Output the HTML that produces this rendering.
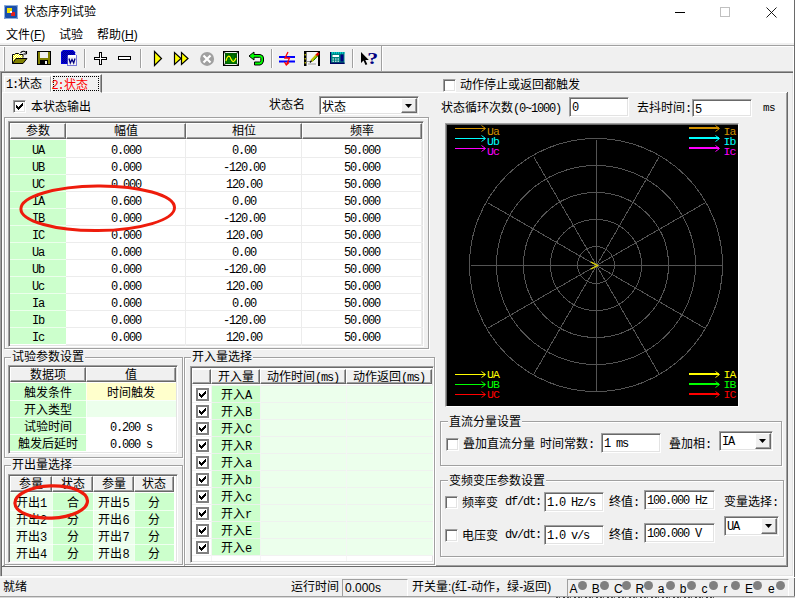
<!DOCTYPE html>
<html lang="zh-CN"><head><meta charset="utf-8"><title>状态序列试验</title>
<style>
html,body{margin:0;padding:0;}
body{width:795px;height:598px;overflow:hidden;background:#f0f0f0;position:relative;font-family:"Liberation Sans",sans-serif;font-size:12px;color:#000;}
div,span.a,svg{position:absolute;box-sizing:border-box;}
.t{white-space:nowrap;line-height:14px;font-size:12px;}
.m{white-space:nowrap;line-height:14px;font-size:12px;font-family:"Liberation Mono","Liberation Sans",monospace;letter-spacing:-1.2px;}
.mm{font-family:"Liberation Mono","Liberation Sans",monospace;letter-spacing:-1.2px;}
.etchw{border:1px solid #a0a0a0;box-shadow:1px 1px 0 #fff, inset 1px 1px 0 #fff;}
.sunk{border:1px solid;border-color:#a0a0a0 #fff #fff #a0a0a0;box-shadow:inset 1px 1px 0 #696969;background:#fff;}
.inp{border:1px solid;border-color:#a0a0a0 #fff #fff #a0a0a0;box-shadow:inset 1px 1px 0 #696969, inset -1px -1px 0 #e3e3e3;background:#fff;white-space:nowrap;overflow:hidden;font-size:12px;line-height:14px;padding:3px 0 0 2px;}
.hdr{background:#f0f0f0;border:1px solid;border-color:#fff #696969 #696969 #fff;box-shadow:inset -1px -1px 0 #a0a0a0;text-align:center;line-height:15px;font-size:12px;white-space:nowrap;overflow:hidden;}
.cell{white-space:nowrap;overflow:hidden;text-align:center;font-size:12px;line-height:20px;}
.cb{background:#fff;border:1px solid;border-color:#a0a0a0 #fff #fff #a0a0a0;box-shadow:inset 1px 1px 0 #696969, inset -1px -1px 0 #e3e3e3;}
.cb2{background:#fff;border:2px solid #808080;}
.cb2 svg{left:1px !important;top:1px !important;}
.gl{background:#f0f0f0;padding:0 1px;white-space:nowrap;line-height:14px;font-size:12px;}
.grid{background:#fff;border:1px solid;border-color:#a0a0a0 #fff #fff #a0a0a0;box-shadow:inset 1px 1px 0 #696969, inset -1px -1px 0 #e3e3e3;}
.btn{background:#f0f0f0;border:1px solid;border-color:#fff #696969 #696969 #fff;box-shadow:inset -1px -1px 0 #a0a0a0;}
</style></head><body>

<div style="left:0px;top:0px;width:795px;height:43px;background:#fff;"></div>
<svg style="left:4px;top:5px" width="14" height="14" viewBox="0 0 14 14"><rect x="0" y="0" width="14" height="14" rx="1.5" fill="#1b4fa8"/><rect x="0.5" y="0.5" width="13" height="13" rx="1.5" fill="none" stroke="#8fb0e0" stroke-width="1"/><rect x="3" y="3" width="5" height="5" fill="#f2e200"/><rect x="7" y="7" width="4" height="4" fill="#e02020"/><rect x="6" y="6" width="2" height="2" fill="#fff"/></svg>
<div class="t" style="left:24px;top:5px;">状态序列试验</div>
<svg style="left:669px;top:0" width="125" height="26" viewBox="0 0 125 26"><path d="M6 12.5h10" stroke="#000" stroke-width="1"/><rect x="51.5" y="7.5" width="9" height="9" fill="none" stroke="#c0c0c0" stroke-width="1"/><path d="M97.5 7.5l10 10M107.5 7.5l-10 10" stroke="#000" stroke-width="0.9"/></svg>
<div class="t" style="left:6px;top:28px;">文件(<u>F</u>)</div>
<div class="t" style="left:59px;top:28px;">试验</div>
<div class="t" style="left:97px;top:28px;">帮助(<u>H</u>)</div>
<div style="left:0px;top:45px;width:794px;height:1px;background:#a0a0a0;"></div>
<div style="left:0px;top:46px;width:794px;height:1px;background:#fff;"></div>
<div style="left:0px;top:71px;width:793px;height:1px;background:#a0a0a0;"></div>
<div style="left:0px;top:72px;width:793px;height:1px;background:#696969;"></div>
<div style="left:3px;top:47px;width:1px;height:24px;background:#fff;"></div>
<div style="left:4px;top:47px;width:1px;height:24px;background:#a0a0a0;"></div>
<div style="left:84px;top:49px;width:1px;height:19px;background:#a0a0a0;"></div>
<div style="left:85px;top:49px;width:1px;height:19px;background:#fff;"></div>
<div style="left:140px;top:49px;width:1px;height:19px;background:#a0a0a0;"></div>
<div style="left:141px;top:49px;width:1px;height:19px;background:#fff;"></div>
<div style="left:271px;top:49px;width:1px;height:19px;background:#a0a0a0;"></div>
<div style="left:272px;top:49px;width:1px;height:19px;background:#fff;"></div>
<div style="left:352px;top:49px;width:1px;height:19px;background:#a0a0a0;"></div>
<div style="left:353px;top:49px;width:1px;height:19px;background:#fff;"></div>
<div style="left:381px;top:46px;width:1px;height:25px;background:#a0a0a0;"></div>
<div style="left:382px;top:46px;width:1px;height:25px;background:#fff;"></div>
<!--TOOLBAR-->
<svg style="left:0;top:46px" width="400" height="25" viewBox="0 46 400 25">
<!-- open -->
<path d="M12.500 63.500v-9h2l1-1h3l1 1h3.500v3" fill="url(#dy)" stroke="#000"/><path d="M12.500 63.500l3.500-5h11l-4 5z" fill="#808000" stroke="#000"/><path d="M20.500 53c1.500-2.200 4-2.200 5.500-0.500m0.500 1.500v-3m0 3h-3" fill="none" stroke="#000" stroke-width="1.100"/>
<!-- save -->
<rect x="37.500" y="51.500" width="13" height="13" fill="#808000" stroke="#000"/><rect x="40" y="52" width="8" height="6" fill="#f0f0f0"/><rect x="40" y="60" width="8" height="4" fill="#000"/><rect x="45" y="61" width="2" height="3" fill="#f0f0f0"/>
<!-- word -->
<defs id="D"><pattern id="dz" width="2" height="2" patternUnits="userSpaceOnUse"><rect width="2" height="2" fill="#0000d0"/><rect width="1" height="1" fill="#000090"/><rect x="1" y="1" width="1" height="1" fill="#000090"/></pattern><pattern id="dy" width="2" height="2" patternUnits="userSpaceOnUse"><rect width="2" height="2" fill="#ffff00"/><rect width="1" height="1" fill="#fff"/><rect x="1" y="1" width="1" height="1" fill="#fff"/></pattern></defs>
<path d="M63 50h10l2 2v12h-14v-12z" fill="url(#dz)"/><path d="M63.500 50.500h9.500l2 2v11h-13.500v-11z" fill="none" stroke="#0000ff" stroke-dasharray="1 1"/>
<rect x="67.500" y="55.500" width="9" height="10" fill="#f4f4f4" stroke="#0000c0" stroke-dasharray="1 1"/><rect x="68" y="55" width="8" height="2" fill="#fff"/><path d="M69 58.500l1.300 4.500 1.700-3.500 1.700 3.500 1.300-4.500" fill="none" stroke="#000080" stroke-width="1.300"/>
<!-- plus -->
<path d="M99 52h3v5h5v3h-5v5h-3v-5h-5v-3h5z" fill="#000"/><path d="M100 53h1v5h5v1h-5v5h-1v-5h-5v-1h5z" fill="#fff"/>
<!-- minus -->
<rect x="118" y="56" width="13" height="4" fill="#000"/><rect x="119" y="57" width="11" height="2" fill="#fff"/>
<!-- play -->
<path d="M154.500 51.500v14l7-7z" fill="#ff0" stroke="#000" stroke-width="1.200"/>
<!-- ff -->
<path d="M174.500 52.500v12l6.500-6z" fill="#ff0" stroke="#000" stroke-width="1.200"/><path d="M181.500 52.500v12l6.500-6z" fill="#ff0" stroke="#000" stroke-width="1.200"/>
<!-- stop -->
<circle cx="207.100" cy="58.900" r="7" fill="#a0a0a0"/><path d="M203.500 55.500l7 7m0-7l-7 7" stroke="#fff" stroke-width="2.200"/>
<!-- monitor -->
<rect x="223" y="51" width="16" height="15" fill="#000"/><rect x="224.500" y="52.500" width="13" height="12" rx="1" fill="#006000" stroke="#f0f0f0"/><path d="M226 59.500h10M226 62h10M229 55v8M233 55v8" stroke="#00a000" stroke-width="0.700"/><path d="M226 61c1.500-6 3.500-6 5-2s3.500 3 5-1" fill="none" stroke="#ffff00" stroke-width="1.200"/>
<!-- undo -->
<path d="M249 56l5-4v2.500h6q3.500 0.500 3.500 3.500v3q-0.500 3.500-3.500 4h-5.500v-3h5q1.300-0.300 1.300-1.500v-2q-0.200-1.200-1.300-1.200h-5.500v2.700z" fill="#00ff00" stroke="#000" stroke-width="1"/>
<!-- blue lines + red -->
<rect x="279" y="56" width="16" height="2" fill="#0000ff"/><rect x="279" y="60.500" width="16" height="2" fill="#0000ff"/><path d="M288 52l-3 6h4.500l-3 6.500m-2-2.500l1.800 3 2.700-2.500" fill="none" stroke="#ff0000" stroke-width="1.300"/>
<!-- film/edit -->
<rect x="304" y="51.500" width="16" height="14" fill="#f6f6f6"/><rect x="304" y="51" width="2.500" height="15" fill="#000"/><rect x="318" y="51" width="2" height="15" fill="#000"/><path d="M304 51.500h16" stroke="#000"/><rect x="304.700" y="54" width="1" height="1.500" fill="#ff0"/><rect x="304.700" y="58" width="1" height="1.500" fill="#ff0"/><rect x="304.700" y="62" width="1" height="1.500" fill="#ff0"/><path d="M307 61.500h5M308 64h8" stroke="#808080" stroke-width="0.800"/><path d="M311.500 61l5.500-6" stroke="#c0c000" stroke-width="2.600"/><path d="M313.500 60.500l4.500-5" stroke="#008000" stroke-width="1"/><path d="M316.500 55.500l2.200-2.500" stroke="#e00000" stroke-width="2.600"/><path d="M310 62.500l1.500-1.800" stroke="#000" stroke-width="1.300"/>
<!-- calc -->
<rect x="330" y="52" width="14.500" height="12" fill="#008080"/><rect x="330" y="52" width="14.500" height="1.800" fill="#00d0d0"/><path d="M331 53h13" stroke="#004040" stroke-dasharray="1 1" stroke-width="0.800"/><rect x="330" y="62.500" width="14.500" height="1.500" fill="#000060"/><rect x="330" y="52" width="1" height="12" fill="#000060"/><rect x="332.500" y="55" width="6.500" height="2" fill="#fff"/><rect x="340.500" y="54.500" width="3" height="7" fill="#000080"/><path d="M332.500 59h7M332.500 61.200h7" stroke="#fff" stroke-dasharray="1.500 1"/>
<!-- help cursor -->
<path d="M361 52v11l2.500-2.500 2 4.500 1.800-0.800-2-4.300h3.500z" fill="#000"/><text transform="translate(367.300 64.300) scale(1.250 1)" font-family="Liberation Serif" font-weight="bold" font-size="17.500" fill="#000080">?</text>
</svg>
<div style="left:0px;top:71px;width:1px;height:505px;background:#a0a0a0;"></div>
<div style="left:1px;top:72px;width:1px;height:504px;background:#696969;"></div>
<div style="left:793px;top:46px;width:1px;height:531px;background:#fff;"></div>
<div style="left:794px;top:0px;width:1px;height:598px;background:#6a6a6a;"></div>
<div style="left:792px;top:73px;width:1px;height:503px;background:#e3e3e3;"></div>
<div style="left:2px;top:576px;width:792px;height:1px;background:#fff;"></div>
<div style="left:2px;top:575px;width:791px;height:1px;background:#e3e3e3;"></div>
<div style="left:2px;top:92px;width:1px;height:475px;background:#fff;"></div>
<div style="left:2px;top:92px;width:785px;height:1px;background:#fff;"></div>
<div style="left:786px;top:93px;width:1px;height:473px;background:#a0a0a0;"></div>
<div style="left:787px;top:92px;width:1px;height:475px;background:#696969;"></div>
<div style="left:3px;top:565px;width:784px;height:1px;background:#a0a0a0;"></div>
<div style="left:2px;top:566px;width:786px;height:1px;background:#696969;"></div>
<div style="left:4px;top:76px;width:47px;height:16px;border:1px solid;border-color:#fff #a0a0a0 transparent #fff;"></div>
<div class="t" style="left:6px;top:77px;"><span class="mm">1:</span>状态</div>
<div style="left:51px;top:74px;width:51px;height:19px;background:#f0f0f0;border:1px solid;border-color:#fff #696969 #f0f0f0 #fff;box-shadow:inset -1px 0 0 #a0a0a0;"></div>
<div style="left:53px;top:76px;width:46px;height:15px;border:1px dotted #000;"></div>
<div class="t" style="left:51.5px;top:77.5px;color:#f00;"><span class="mm">2:</span>状态</div>
<div class="cb" style="left:13px;top:100px;width:13px;height:13px;"><svg style="left:2px;top:2px" width="7" height="7" viewBox="0 0 7 7" shape-rendering="crispEdges"><path d="M0 2h1v1h1v1h1v-1h1v-1h1v-1h1v-1h1v3h-1v1h-1v1h-1v1h-1v1h-1v-1h-1v-1h-1z" fill="#000"/></svg></div>
<div class="t" style="left:31px;top:99.5px;">本状态输出</div>
<div class="t" style="left:269px;top:98px;">状态名</div>
<div class="inp" style="left:319px;top:96px;width:100px;height:19px;">状态</div>
<div class="btn" style="left:401px;top:98px;width:16px;height:15px;"><svg style="left:3px;top:5px" width="7" height="4" viewBox="0 0 7 4"><path d="M0 0h7l-3.500 4z" fill="#000"/></svg></div>
<div class="etchw" style="left:4px;top:117px;width:425px;height:232px;"></div>
<div class="grid" style="left:8px;top:121px;width:416px;height:226px;"></div>
<div class="hdr" style="left:10px;top:123px;width:56px;height:16px;">参数</div>
<div class="hdr" style="left:66px;top:123px;width:120px;height:16px;">幅值</div>
<div class="hdr" style="left:186px;top:123px;width:116px;height:16px;">相位</div>
<div class="hdr" style="left:302px;top:123px;width:120px;height:16px;">频率</div>
<div class="cell mm" style="left:10px;top:140px;width:56px;height:17px;background:#ccffcc;line-height:22px;">UA</div>
<div class="cell mm" style="left:66px;top:140px;width:120px;height:17px;line-height:22px;">0.000</div>
<div class="cell mm" style="left:186px;top:140px;width:116px;height:17px;line-height:22px;">0.00</div>
<div class="cell mm" style="left:302px;top:140px;width:120px;height:17px;line-height:22px;">50.000</div>
<div style="left:66px;top:157px;width:357px;height:1px;background:#ececec;"></div>
<div class="cell mm" style="left:10px;top:157px;width:56px;height:17px;background:#ccffcc;line-height:22px;">UB</div>
<div class="cell mm" style="left:66px;top:157px;width:120px;height:17px;line-height:22px;">0.000</div>
<div class="cell mm" style="left:186px;top:157px;width:116px;height:17px;line-height:22px;">-120.00</div>
<div class="cell mm" style="left:302px;top:157px;width:120px;height:17px;line-height:22px;">50.000</div>
<div style="left:66px;top:174px;width:357px;height:1px;background:#ececec;"></div>
<div class="cell mm" style="left:10px;top:174px;width:56px;height:17px;background:#ccffcc;line-height:22px;">UC</div>
<div class="cell mm" style="left:66px;top:174px;width:120px;height:17px;line-height:22px;">0.000</div>
<div class="cell mm" style="left:186px;top:174px;width:116px;height:17px;line-height:22px;">120.00</div>
<div class="cell mm" style="left:302px;top:174px;width:120px;height:17px;line-height:22px;">50.000</div>
<div style="left:66px;top:191px;width:357px;height:1px;background:#ececec;"></div>
<div class="cell mm" style="left:10px;top:191px;width:56px;height:17px;background:#ccffcc;line-height:22px;">IA</div>
<div class="cell mm" style="left:66px;top:191px;width:120px;height:17px;line-height:22px;">0.600</div>
<div class="cell mm" style="left:186px;top:191px;width:116px;height:17px;line-height:22px;">0.00</div>
<div class="cell mm" style="left:302px;top:191px;width:120px;height:17px;line-height:22px;">50.000</div>
<div style="left:66px;top:208px;width:357px;height:1px;background:#ececec;"></div>
<div class="cell mm" style="left:10px;top:208px;width:56px;height:17px;background:#ccffcc;line-height:22px;">IB</div>
<div class="cell mm" style="left:66px;top:208px;width:120px;height:17px;line-height:22px;">0.000</div>
<div class="cell mm" style="left:186px;top:208px;width:116px;height:17px;line-height:22px;">-120.00</div>
<div class="cell mm" style="left:302px;top:208px;width:120px;height:17px;line-height:22px;">50.000</div>
<div style="left:66px;top:225px;width:357px;height:1px;background:#ececec;"></div>
<div class="cell mm" style="left:10px;top:225px;width:56px;height:17px;background:#ccffcc;line-height:22px;">IC</div>
<div class="cell mm" style="left:66px;top:225px;width:120px;height:17px;line-height:22px;">0.000</div>
<div class="cell mm" style="left:186px;top:225px;width:116px;height:17px;line-height:22px;">120.00</div>
<div class="cell mm" style="left:302px;top:225px;width:120px;height:17px;line-height:22px;">50.000</div>
<div style="left:66px;top:242px;width:357px;height:1px;background:#ececec;"></div>
<div class="cell mm" style="left:10px;top:242px;width:56px;height:17px;background:#ccffcc;line-height:22px;">Ua</div>
<div class="cell mm" style="left:66px;top:242px;width:120px;height:17px;line-height:22px;">0.000</div>
<div class="cell mm" style="left:186px;top:242px;width:116px;height:17px;line-height:22px;">0.00</div>
<div class="cell mm" style="left:302px;top:242px;width:120px;height:17px;line-height:22px;">50.000</div>
<div style="left:66px;top:259px;width:357px;height:1px;background:#ececec;"></div>
<div class="cell mm" style="left:10px;top:259px;width:56px;height:17px;background:#ccffcc;line-height:22px;">Ub</div>
<div class="cell mm" style="left:66px;top:259px;width:120px;height:17px;line-height:22px;">0.000</div>
<div class="cell mm" style="left:186px;top:259px;width:116px;height:17px;line-height:22px;">-120.00</div>
<div class="cell mm" style="left:302px;top:259px;width:120px;height:17px;line-height:22px;">50.000</div>
<div style="left:66px;top:276px;width:357px;height:1px;background:#ececec;"></div>
<div class="cell mm" style="left:10px;top:276px;width:56px;height:17px;background:#ccffcc;line-height:22px;">Uc</div>
<div class="cell mm" style="left:66px;top:276px;width:120px;height:17px;line-height:22px;">0.000</div>
<div class="cell mm" style="left:186px;top:276px;width:116px;height:17px;line-height:22px;">120.00</div>
<div class="cell mm" style="left:302px;top:276px;width:120px;height:17px;line-height:22px;">50.000</div>
<div style="left:66px;top:293px;width:357px;height:1px;background:#ececec;"></div>
<div class="cell mm" style="left:10px;top:293px;width:56px;height:17px;background:#ccffcc;line-height:22px;">Ia</div>
<div class="cell mm" style="left:66px;top:293px;width:120px;height:17px;line-height:22px;">0.000</div>
<div class="cell mm" style="left:186px;top:293px;width:116px;height:17px;line-height:22px;">0.00</div>
<div class="cell mm" style="left:302px;top:293px;width:120px;height:17px;line-height:22px;">50.000</div>
<div style="left:66px;top:310px;width:357px;height:1px;background:#ececec;"></div>
<div class="cell mm" style="left:10px;top:310px;width:56px;height:17px;background:#ccffcc;line-height:22px;">Ib</div>
<div class="cell mm" style="left:66px;top:310px;width:120px;height:17px;line-height:22px;">0.000</div>
<div class="cell mm" style="left:186px;top:310px;width:116px;height:17px;line-height:22px;">-120.00</div>
<div class="cell mm" style="left:302px;top:310px;width:120px;height:17px;line-height:22px;">50.000</div>
<div style="left:66px;top:327px;width:357px;height:1px;background:#ececec;"></div>
<div class="cell mm" style="left:10px;top:327px;width:56px;height:17px;background:#ccffcc;line-height:22px;">Ic</div>
<div class="cell mm" style="left:66px;top:327px;width:120px;height:17px;line-height:22px;">0.000</div>
<div class="cell mm" style="left:186px;top:327px;width:116px;height:17px;line-height:22px;">120.00</div>
<div class="cell mm" style="left:302px;top:327px;width:120px;height:17px;line-height:22px;">50.000</div>
<div style="left:66px;top:344px;width:357px;height:1px;background:#ececec;"></div>
<div style="left:185px;top:140px;width:1px;height:206px;background:#ececec;"></div>
<div style="left:301px;top:140px;width:1px;height:206px;background:#ececec;"></div>
<div style="left:421px;top:140px;width:1px;height:206px;background:#ececec;"></div>
<div style="left:10px;top:157px;width:56px;height:1px;background:rgba(255,255,255,0.6);"></div>
<div style="left:10px;top:174px;width:56px;height:1px;background:rgba(255,255,255,0.6);"></div>
<div style="left:10px;top:191px;width:56px;height:1px;background:rgba(255,255,255,0.6);"></div>
<div style="left:10px;top:208px;width:56px;height:1px;background:rgba(255,255,255,0.6);"></div>
<div style="left:10px;top:225px;width:56px;height:1px;background:rgba(255,255,255,0.6);"></div>
<div style="left:10px;top:242px;width:56px;height:1px;background:rgba(255,255,255,0.6);"></div>
<div style="left:10px;top:259px;width:56px;height:1px;background:rgba(255,255,255,0.6);"></div>
<div style="left:10px;top:276px;width:56px;height:1px;background:rgba(255,255,255,0.6);"></div>
<div style="left:10px;top:293px;width:56px;height:1px;background:rgba(255,255,255,0.6);"></div>
<div style="left:10px;top:310px;width:56px;height:1px;background:rgba(255,255,255,0.6);"></div>
<div style="left:10px;top:327px;width:56px;height:1px;background:rgba(255,255,255,0.6);"></div>
<div style="left:10px;top:344px;width:56px;height:1px;background:rgba(255,255,255,0.6);"></div>
<div class="etchw" style="left:4px;top:357px;width:179px;height:101px;"></div>
<div class="gl" style="left:11px;top:350px;">试验参数设置</div>
<div class="grid" style="left:8px;top:365px;width:170px;height:89px;"></div>
<div class="hdr" style="left:10px;top:367px;width:76px;height:15px;">数据项</div>
<div class="hdr" style="left:86px;top:367px;width:90px;height:15px;">值</div>
<div class="cell" style="left:10px;top:383px;width:76px;height:17px;background:#ccffcc;">触发条件</div>
<div class="cell" style="left:86px;top:383px;width:90px;height:17px;background:#ffffcc;">时间触发</div>
<div class="cell" style="left:10px;top:400px;width:76px;height:17px;background:#ccffcc;">开入类型</div>
<div class="cell" style="left:86px;top:400px;width:90px;height:17px;background:#ecffec;"></div>
<div class="cell" style="left:10px;top:417px;width:76px;height:17px;background:#ccffcc;">试验时间</div>
<div class="cell" style="left:86px;top:417px;width:90px;height:17px;background:#fff;"><span class="mm">0.200 s</span></div>
<div class="cell" style="left:10px;top:434px;width:76px;height:17px;background:#ccffcc;">触发后延时</div>
<div class="cell" style="left:86px;top:434px;width:90px;height:17px;background:#fff;"><span class="mm">0.000 s</span></div>
<div style="left:10px;top:382px;width:166px;height:1px;background:rgba(255,255,255,0.7);"></div>
<div style="left:10px;top:400px;width:166px;height:1px;background:rgba(255,255,255,0.7);"></div>
<div style="left:10px;top:417px;width:166px;height:1px;background:rgba(255,255,255,0.7);"></div>
<div style="left:10px;top:434px;width:166px;height:1px;background:rgba(255,255,255,0.7);"></div>
<div style="left:10px;top:451px;width:166px;height:1px;background:rgba(255,255,255,0.7);"></div>
<div style="left:86px;top:383px;width:1px;height:68px;background:rgba(255,255,255,0.7);"></div>
<div class="etchw" style="left:4px;top:465px;width:179px;height:100px;"></div>
<div class="gl" style="left:11px;top:458px;">开出量选择</div>
<div class="grid" style="left:8px;top:474px;width:170px;height:89px;"></div>
<div class="hdr" style="left:10px;top:476px;width:42px;height:16px;">参量</div>
<div class="hdr" style="left:52px;top:476px;width:41px;height:16px;">状态</div>
<div class="hdr" style="left:93px;top:476px;width:41px;height:16px;">参量</div>
<div class="hdr" style="left:134px;top:476px;width:40px;height:16px;">状态</div>
<div class="cell" style="left:10px;top:493px;width:42px;height:17px;background:#ecffec;">开出<span class="mm">1</span></div>
<div class="cell" style="left:52px;top:493px;width:41px;height:17px;background:#ccffcc;">合</div>
<div class="cell" style="left:93px;top:493px;width:41px;height:17px;background:#ecffec;">开出<span class="mm">5</span></div>
<div class="cell" style="left:134px;top:493px;width:40px;height:17px;background:#ccffcc;">分</div>
<div class="cell" style="left:10px;top:510px;width:42px;height:17px;background:#ecffec;">开出<span class="mm">2</span></div>
<div class="cell" style="left:52px;top:510px;width:41px;height:17px;background:#ccffcc;">分</div>
<div class="cell" style="left:93px;top:510px;width:41px;height:17px;background:#ecffec;">开出<span class="mm">6</span></div>
<div class="cell" style="left:134px;top:510px;width:40px;height:17px;background:#ccffcc;">分</div>
<div class="cell" style="left:10px;top:527px;width:42px;height:17px;background:#ecffec;">开出<span class="mm">3</span></div>
<div class="cell" style="left:52px;top:527px;width:41px;height:17px;background:#ccffcc;">分</div>
<div class="cell" style="left:93px;top:527px;width:41px;height:17px;background:#ecffec;">开出<span class="mm">7</span></div>
<div class="cell" style="left:134px;top:527px;width:40px;height:17px;background:#ccffcc;">分</div>
<div class="cell" style="left:10px;top:544px;width:42px;height:17px;background:#ecffec;">开出<span class="mm">4</span></div>
<div class="cell" style="left:52px;top:544px;width:41px;height:17px;background:#ccffcc;">分</div>
<div class="cell" style="left:93px;top:544px;width:41px;height:17px;background:#ecffec;">开出<span class="mm">8</span></div>
<div class="cell" style="left:134px;top:544px;width:40px;height:17px;background:#ccffcc;">分</div>
<div style="left:10px;top:510px;width:164px;height:1px;background:rgba(255,255,255,0.7);"></div>
<div style="left:10px;top:527px;width:164px;height:1px;background:rgba(255,255,255,0.7);"></div>
<div style="left:10px;top:544px;width:164px;height:1px;background:rgba(255,255,255,0.7);"></div>
<div style="left:10px;top:561px;width:164px;height:1px;background:rgba(255,255,255,0.7);"></div>
<div style="left:52px;top:493px;width:1px;height:68px;background:rgba(255,255,255,0.7);"></div>
<div style="left:93px;top:493px;width:1px;height:68px;background:rgba(255,255,255,0.7);"></div>
<div style="left:134px;top:493px;width:1px;height:68px;background:rgba(255,255,255,0.7);"></div>
<div class="etchw" style="left:184px;top:357px;width:251px;height:208px;"></div>
<div class="gl" style="left:191px;top:350px;">开入量选择</div>
<div class="grid" style="left:190px;top:366px;width:244px;height:197px;"></div>
<div class="hdr" style="left:192px;top:369px;width:19px;height:15px;"></div>
<div class="hdr" style="left:211px;top:369px;width:49px;height:15px;">开入量</div>
<div class="hdr" style="left:260px;top:369px;width:86px;height:15px;">动作时间<span class="mm">(ms)</span></div>
<div class="hdr" style="left:346px;top:369px;width:86px;height:15px;">动作返回<span class="mm">(ms)</span></div>
<div class="cell" style="left:211px;top:385px;width:50px;height:17px;background:#ccffcc;">开入<span class="mm">A</span></div>
<div class="cell" style="left:261px;top:385px;width:172px;height:17px;background:#ecffec;"></div>
<div class="cb2" style="left:196px;top:388px;width:13px;height:13px;"><svg style="left:2px;top:2px" width="7" height="7" viewBox="0 0 7 7" shape-rendering="crispEdges"><path d="M0 2h1v1h1v1h1v-1h1v-1h1v-1h1v-1h1v3h-1v1h-1v1h-1v1h-1v1h-1v-1h-1v-1h-1z" fill="#000"/></svg></div>
<div class="cell" style="left:211px;top:402px;width:50px;height:17px;background:#ccffcc;">开入<span class="mm">B</span></div>
<div class="cell" style="left:261px;top:402px;width:172px;height:17px;background:#ecffec;"></div>
<div class="cb2" style="left:196px;top:405px;width:13px;height:13px;"><svg style="left:2px;top:2px" width="7" height="7" viewBox="0 0 7 7" shape-rendering="crispEdges"><path d="M0 2h1v1h1v1h1v-1h1v-1h1v-1h1v-1h1v3h-1v1h-1v1h-1v1h-1v1h-1v-1h-1v-1h-1z" fill="#000"/></svg></div>
<div class="cell" style="left:211px;top:419px;width:50px;height:17px;background:#ccffcc;">开入<span class="mm">C</span></div>
<div class="cell" style="left:261px;top:419px;width:172px;height:17px;background:#ecffec;"></div>
<div class="cb2" style="left:196px;top:422px;width:13px;height:13px;"><svg style="left:2px;top:2px" width="7" height="7" viewBox="0 0 7 7" shape-rendering="crispEdges"><path d="M0 2h1v1h1v1h1v-1h1v-1h1v-1h1v-1h1v3h-1v1h-1v1h-1v1h-1v1h-1v-1h-1v-1h-1z" fill="#000"/></svg></div>
<div class="cell" style="left:211px;top:436px;width:50px;height:17px;background:#ccffcc;">开入<span class="mm">R</span></div>
<div class="cell" style="left:261px;top:436px;width:172px;height:17px;background:#ecffec;"></div>
<div class="cb2" style="left:196px;top:439px;width:13px;height:13px;"><svg style="left:2px;top:2px" width="7" height="7" viewBox="0 0 7 7" shape-rendering="crispEdges"><path d="M0 2h1v1h1v1h1v-1h1v-1h1v-1h1v-1h1v3h-1v1h-1v1h-1v1h-1v1h-1v-1h-1v-1h-1z" fill="#000"/></svg></div>
<div class="cell" style="left:211px;top:453px;width:50px;height:17px;background:#ccffcc;">开入<span class="mm">a</span></div>
<div class="cell" style="left:261px;top:453px;width:172px;height:17px;background:#ecffec;"></div>
<div class="cb2" style="left:196px;top:456px;width:13px;height:13px;"><svg style="left:2px;top:2px" width="7" height="7" viewBox="0 0 7 7" shape-rendering="crispEdges"><path d="M0 2h1v1h1v1h1v-1h1v-1h1v-1h1v-1h1v3h-1v1h-1v1h-1v1h-1v1h-1v-1h-1v-1h-1z" fill="#000"/></svg></div>
<div class="cell" style="left:211px;top:470px;width:50px;height:17px;background:#ccffcc;">开入<span class="mm">b</span></div>
<div class="cell" style="left:261px;top:470px;width:172px;height:17px;background:#ecffec;"></div>
<div class="cb2" style="left:196px;top:473px;width:13px;height:13px;"><svg style="left:2px;top:2px" width="7" height="7" viewBox="0 0 7 7" shape-rendering="crispEdges"><path d="M0 2h1v1h1v1h1v-1h1v-1h1v-1h1v-1h1v3h-1v1h-1v1h-1v1h-1v1h-1v-1h-1v-1h-1z" fill="#000"/></svg></div>
<div class="cell" style="left:211px;top:487px;width:50px;height:17px;background:#ccffcc;">开入<span class="mm">c</span></div>
<div class="cell" style="left:261px;top:487px;width:172px;height:17px;background:#ecffec;"></div>
<div class="cb2" style="left:196px;top:490px;width:13px;height:13px;"><svg style="left:2px;top:2px" width="7" height="7" viewBox="0 0 7 7" shape-rendering="crispEdges"><path d="M0 2h1v1h1v1h1v-1h1v-1h1v-1h1v-1h1v3h-1v1h-1v1h-1v1h-1v1h-1v-1h-1v-1h-1z" fill="#000"/></svg></div>
<div class="cell" style="left:211px;top:504px;width:50px;height:17px;background:#ccffcc;">开入<span class="mm">r</span></div>
<div class="cell" style="left:261px;top:504px;width:172px;height:17px;background:#ecffec;"></div>
<div class="cb2" style="left:196px;top:507px;width:13px;height:13px;"><svg style="left:2px;top:2px" width="7" height="7" viewBox="0 0 7 7" shape-rendering="crispEdges"><path d="M0 2h1v1h1v1h1v-1h1v-1h1v-1h1v-1h1v3h-1v1h-1v1h-1v1h-1v1h-1v-1h-1v-1h-1z" fill="#000"/></svg></div>
<div class="cell" style="left:211px;top:521px;width:50px;height:17px;background:#ccffcc;">开入<span class="mm">E</span></div>
<div class="cell" style="left:261px;top:521px;width:172px;height:17px;background:#ecffec;"></div>
<div class="cb2" style="left:196px;top:524px;width:13px;height:13px;"><svg style="left:2px;top:2px" width="7" height="7" viewBox="0 0 7 7" shape-rendering="crispEdges"><path d="M0 2h1v1h1v1h1v-1h1v-1h1v-1h1v-1h1v3h-1v1h-1v1h-1v1h-1v1h-1v-1h-1v-1h-1z" fill="#000"/></svg></div>
<div class="cell" style="left:211px;top:538px;width:50px;height:17px;background:#ccffcc;">开入<span class="mm">e</span></div>
<div class="cell" style="left:261px;top:538px;width:172px;height:17px;background:#ecffec;"></div>
<div class="cb2" style="left:196px;top:541px;width:13px;height:13px;"><svg style="left:2px;top:2px" width="7" height="7" viewBox="0 0 7 7" shape-rendering="crispEdges"><path d="M0 2h1v1h1v1h1v-1h1v-1h1v-1h1v-1h1v3h-1v1h-1v1h-1v1h-1v1h-1v-1h-1v-1h-1z" fill="#000"/></svg></div>
<div style="left:192px;top:385px;width:241px;height:1px;background:rgba(240,240,240,0.85);"></div>
<div style="left:192px;top:402px;width:241px;height:1px;background:rgba(240,240,240,0.85);"></div>
<div style="left:192px;top:419px;width:241px;height:1px;background:rgba(240,240,240,0.85);"></div>
<div style="left:192px;top:436px;width:241px;height:1px;background:rgba(240,240,240,0.85);"></div>
<div style="left:192px;top:453px;width:241px;height:1px;background:rgba(240,240,240,0.85);"></div>
<div style="left:192px;top:470px;width:241px;height:1px;background:rgba(240,240,240,0.85);"></div>
<div style="left:192px;top:487px;width:241px;height:1px;background:rgba(240,240,240,0.85);"></div>
<div style="left:192px;top:504px;width:241px;height:1px;background:rgba(240,240,240,0.85);"></div>
<div style="left:192px;top:521px;width:241px;height:1px;background:rgba(240,240,240,0.85);"></div>
<div style="left:192px;top:538px;width:241px;height:1px;background:rgba(240,240,240,0.85);"></div>
<div style="left:192px;top:555px;width:241px;height:1px;background:rgba(240,240,240,0.85);"></div>
<div style="left:211px;top:385px;width:1px;height:176px;background:rgba(245,245,245,0.9);"></div>
<div style="left:260px;top:385px;width:1px;height:176px;background:rgba(245,245,245,0.9);"></div>
<div style="left:346px;top:385px;width:1px;height:176px;background:rgba(245,245,245,0.9);"></div>
<div class="cb" style="left:443px;top:79px;width:13px;height:13px;"></div>
<div class="t" style="left:460px;top:78px;">动作停止或返回都触发</div>
<div class="t" style="left:441px;top:101px;">状态循环次数<span class="mm">(0~1000)</span></div>
<div class="inp mm" style="left:569px;top:97px;width:60px;height:20px;">0</div>
<div class="t" style="left:637px;top:101px;">去抖时间<span class="mm">:</span></div>
<div class="inp mm" style="left:692px;top:99px;width:60px;height:18px;">5</div>
<div class="m" style="left:763px;top:101px;font-size:11px;letter-spacing:-0.600px;">ms</div>
<div style="left:445px;top:123px;width:294px;height:284px;border:1px solid;border-color:#a0a0a0 #fff #fff #a0a0a0;background:#000;box-shadow:inset 1px 1px 0 #696969;"></div>
<svg style="left:446px;top:124px" width="292" height="282" viewBox="446 124 292 282" shape-rendering="crispEdges"><g fill="none" stroke="#545454" stroke-width="1"><circle cx="596" cy="265" r="18.5"/><circle cx="596" cy="265" r="45.5"/><circle cx="596" cy="265" r="72.5"/><circle cx="596" cy="265" r="99.5"/><circle cx="596" cy="265" r="126.5"/><path d="M596.5 265.5L722.0 265.5"/><path d="M596.5 265.5L705.2 202.8"/><path d="M596.5 265.5L659.2 156.8"/><path d="M596.5 265.5L596.5 140.0"/><path d="M596.5 265.5L533.8 156.8"/><path d="M596.5 265.5L487.8 202.8"/><path d="M596.5 265.5L471.0 265.5"/><path d="M596.5 265.5L487.8 328.2"/><path d="M596.5 265.5L533.8 374.2"/><path d="M596.5 265.5L596.5 391.0"/><path d="M596.5 265.5L659.2 374.2"/><path d="M596.5 265.5L705.2 328.3"/></g><path d="M591 262l6.500 3.500-6.500 3.500" fill="none" stroke="#e8dc00" stroke-width="1.300" shape-rendering="auto"/><path d="M455 128.5h30" stroke="#d09000" stroke-width="1" fill="none"/><path d="M481.5 125.5l4 3-4 3" stroke="#d09000" stroke-width="1" fill="none" shape-rendering="auto"/><text x="487" y="135" fill="#d09000" font-family="Liberation Mono, monospace" font-size="11.5" letter-spacing="-0.9">Ua</text><path d="M455 138.5h30" stroke="#00ffff" stroke-width="1" fill="none"/><path d="M481.5 135.5l4 3-4 3" stroke="#00ffff" stroke-width="1" fill="none" shape-rendering="auto"/><text x="487" y="145" fill="#00ffff" font-family="Liberation Mono, monospace" font-size="11.5" letter-spacing="-0.9">Ub</text><path d="M455 148.5h30" stroke="#ff00ff" stroke-width="1" fill="none"/><path d="M481.5 145.5l4 3-4 3" stroke="#ff00ff" stroke-width="1" fill="none" shape-rendering="auto"/><text x="487" y="155" fill="#ff00ff" font-family="Liberation Mono, monospace" font-size="11.5" letter-spacing="-0.9">Uc</text><path d="M689 128h30" stroke="#d09000" stroke-width="2" fill="none"/><path d="M715.5 125.5l4 3-4 3" stroke="#d09000" stroke-width="1" fill="none" shape-rendering="auto"/><text x="723.5" y="135" fill="#d09000" font-family="Liberation Mono, monospace" font-size="11.5" letter-spacing="-0.9">Ia</text><path d="M689 138h30" stroke="#00ffff" stroke-width="2" fill="none"/><path d="M715.5 135.5l4 3-4 3" stroke="#00ffff" stroke-width="1" fill="none" shape-rendering="auto"/><text x="723.5" y="145" fill="#00ffff" font-family="Liberation Mono, monospace" font-size="11.5" letter-spacing="-0.9">Ib</text><path d="M689 148h30" stroke="#ff00ff" stroke-width="2" fill="none"/><path d="M715.5 145.5l4 3-4 3" stroke="#ff00ff" stroke-width="1" fill="none" shape-rendering="auto"/><text x="723.5" y="155" fill="#ff00ff" font-family="Liberation Mono, monospace" font-size="11.5" letter-spacing="-0.9">Ic</text><path d="M455 374.5h30" stroke="#ffff00" stroke-width="1" fill="none"/><path d="M481.5 371.5l4 3-4 3" stroke="#ffff00" stroke-width="1" fill="none" shape-rendering="auto"/><text x="487" y="378" fill="#ffff00" font-family="Liberation Mono, monospace" font-size="11.5" letter-spacing="-0.9">UA</text><path d="M455 384.5h30" stroke="#00ff00" stroke-width="1" fill="none"/><path d="M481.5 381.5l4 3-4 3" stroke="#00ff00" stroke-width="1" fill="none" shape-rendering="auto"/><text x="487" y="388" fill="#00ff00" font-family="Liberation Mono, monospace" font-size="11.5" letter-spacing="-0.9">UB</text><path d="M455 394.5h30" stroke="#ff0000" stroke-width="1" fill="none"/><path d="M481.5 391.5l4 3-4 3" stroke="#ff0000" stroke-width="1" fill="none" shape-rendering="auto"/><text x="487" y="398" fill="#ff0000" font-family="Liberation Mono, monospace" font-size="11.5" letter-spacing="-0.9">UC</text><path d="M689 374h30" stroke="#ffff00" stroke-width="2" fill="none"/><path d="M715.5 371.5l4 3-4 3" stroke="#ffff00" stroke-width="1" fill="none" shape-rendering="auto"/><text x="723.5" y="378" fill="#ffff00" font-family="Liberation Mono, monospace" font-size="11.5" letter-spacing="-0.9">IA</text><path d="M689 384h30" stroke="#00ff00" stroke-width="2" fill="none"/><path d="M715.5 381.5l4 3-4 3" stroke="#00ff00" stroke-width="1" fill="none" shape-rendering="auto"/><text x="723.5" y="388" fill="#00ff00" font-family="Liberation Mono, monospace" font-size="11.5" letter-spacing="-0.9">IB</text><path d="M689 394h30" stroke="#ff0000" stroke-width="2" fill="none"/><path d="M715.5 391.5l4 3-4 3" stroke="#ff0000" stroke-width="1" fill="none" shape-rendering="auto"/><text x="723.5" y="398" fill="#ff0000" font-family="Liberation Mono, monospace" font-size="11.5" letter-spacing="-0.9">IC</text></svg>
<div class="etchw" style="left:440px;top:421px;width:342px;height:45px;"></div>
<div class="gl" style="left:448px;top:415px;">直流分量设置</div>
<div class="cb" style="left:446px;top:438px;width:13px;height:13px;"></div>
<div class="t" style="left:463px;top:437px;">叠加直流分量</div>
<div class="t" style="left:540px;top:437px;">时间常数<span class="mm">:</span></div>
<div class="inp mm" style="left:601px;top:433px;width:60px;height:20px;">1 ms</div>
<div class="t" style="left:669px;top:437px;">叠加相<span class="mm">:</span></div>
<div class="inp mm" style="left:719px;top:431px;width:54px;height:20px;">IA</div>
<div class="btn" style="left:755px;top:433px;width:16px;height:16px;"><svg style="left:3px;top:5px" width="7" height="4" viewBox="0 0 7 4"><path d="M0 0h7l-3.500 4z" fill="#000"/></svg></div>
<div class="etchw" style="left:440px;top:480px;width:344px;height:77px;"></div>
<div class="gl" style="left:448px;top:474px;">变频变压参数设置</div>
<div class="cb" style="left:445px;top:496px;width:13px;height:13px;"></div>
<div class="t" style="left:462px;top:495.5px;">频率变</div>
<div class="m" style="left:505px;top:495px;">df/dt:</div>
<div class="inp mm" style="left:544px;top:492px;width:60px;height:20px;">1.0 Hz/s</div>
<div class="t" style="left:609px;top:495px;">终值<span class="mm">:</span></div>
<div class="inp mm" style="left:644px;top:490px;width:71px;height:20px;">100.000 Hz</div>
<div class="t" style="left:724px;top:495px;">变量选择<span class="mm">:</span></div>
<div class="cb" style="left:445px;top:529px;width:13px;height:13px;"></div>
<div class="t" style="left:462px;top:528.5px;">电压变</div>
<div class="m" style="left:505px;top:528px;">dv/dt:</div>
<div class="inp mm" style="left:544px;top:525px;width:60px;height:20px;">1.0 v/s</div>
<div class="t" style="left:609px;top:528px;">终值<span class="mm">:</span></div>
<div class="inp mm" style="left:644px;top:523px;width:71px;height:20px;">100.000 V</div>
<div class="inp mm" style="left:724px;top:516px;width:55px;height:20px;">UA</div>
<div class="btn" style="left:761px;top:518px;width:16px;height:16px;"><svg style="left:3px;top:5px" width="7" height="4" viewBox="0 0 7 4"><path d="M0 0h7l-3.500 4z" fill="#000"/></svg></div>
<div style="left:0px;top:577px;width:795px;height:1px;background:#fbfbfb;"></div>
<div class="t" style="left:3px;top:580px;">就绪</div>
<div class="t" style="left:291px;top:580px;">运行时间</div>
<div style="left:342px;top:579px;width:66px;height:18px;border:1px solid;border-color:#a0a0a0 #fff #fff #a0a0a0;"></div>
<div class="t" style="left:345px;top:581px;">0.000s</div>
<div class="t" style="left:412px;top:580px;">开关量:(红-动作，绿-返回)</div>
<div style="left:567px;top:579px;width:222px;height:18px;border:1px solid;border-color:#a0a0a0 #fff #fff #a0a0a0;"></div>
<div class="t" style="left:569.5px;top:582px;">A</div><div style="left:577.5px;top:581px;width:9px;height:9px;border-radius:50%;background:#808080;"></div><div class="t" style="left:591.8px;top:582px;">B</div><div style="left:599.5px;top:581px;width:9px;height:9px;border-radius:50%;background:#808080;"></div><div class="t" style="left:614px;top:582px;">C</div><div style="left:621.5px;top:581px;width:9px;height:9px;border-radius:50%;background:#808080;"></div><div class="t" style="left:635.6px;top:582px;">R</div><div style="left:643.5px;top:581px;width:9px;height:9px;border-radius:50%;background:#808080;"></div><div class="t" style="left:657.7px;top:582px;">a</div><div style="left:665.5px;top:581px;width:9px;height:9px;border-radius:50%;background:#808080;"></div><div class="t" style="left:679.7px;top:582px;">b</div><div style="left:687.0px;top:581px;width:9px;height:9px;border-radius:50%;background:#808080;"></div><div class="t" style="left:701.5px;top:582px;">c</div><div style="left:709.1px;top:581px;width:9px;height:9px;border-radius:50%;background:#808080;"></div><div class="t" style="left:723.5px;top:582px;">r</div><div style="left:731.1px;top:581px;width:9px;height:9px;border-radius:50%;background:#808080;"></div><div class="t" style="left:745px;top:582px;">E</div><div style="left:753.0px;top:581px;width:9px;height:9px;border-radius:50%;background:#808080;"></div><div class="t" style="left:768px;top:582px;">e</div><div style="left:775.5px;top:581px;width:9px;height:9px;border-radius:50%;background:#808080;"></div>
<div style="left:0px;top:596px;width:795px;height:1px;background:#a0a0a0;"></div>
<div style="left:0px;top:597px;width:795px;height:1px;background:#d8d8d8;"></div>
<div style="left:556px;top:597px;width:160px;height:1px;background:repeating-linear-gradient(90deg,#444 0 2px,#ccc 2px 3px,#555 3px 4px,#ddd 4px 7px,#333 7px 9px,#ddd 9px 11px);"></div>
<svg style="left:0;top:0" width="795" height="598" viewBox="0 0 795 598"><ellipse cx="97.700" cy="208.300" rx="76.800" ry="22.300" fill="none" stroke="#ee1c0c" stroke-width="3" transform="rotate(-0.500 97.700 208.300)"/><ellipse cx="51.200" cy="502" rx="36.300" ry="16.100" fill="none" stroke="#ee1c0c" stroke-width="3.200" transform="rotate(-2 51.200 502)"/></svg>
</body></html>
